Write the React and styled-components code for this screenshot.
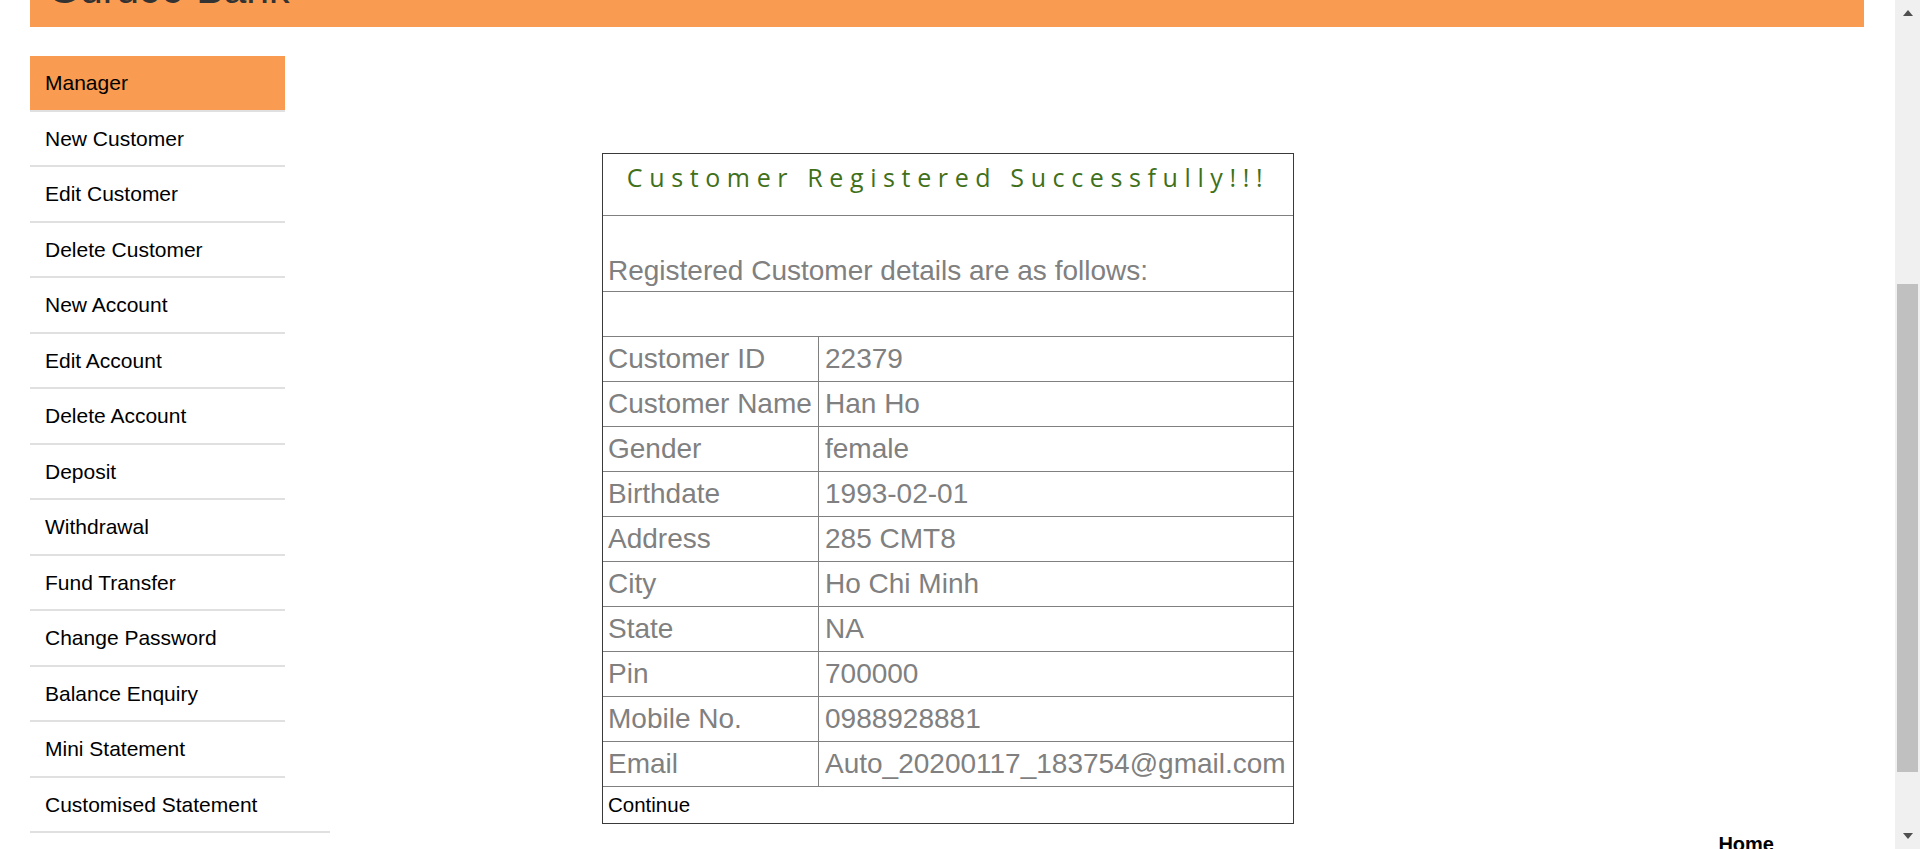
import React, { useLayoutEffect, useEffect } from 'react';
import styled, { createGlobalStyle } from 'styled-components';

const GlobalStyle = createGlobalStyle`
  html, body {
    margin: 0;
    padding: 0;
    background: #ffffff;
  }
  body {
    font-family: "Liberation Sans", Arial, sans-serif;
    color: #000;
  }
  *, *::before, *::after {
    box-sizing: border-box;
  }
`;

const ORANGE = '#f99b51';

const Page = styled.div`
  width: 100%;
  padding-bottom: 99px;
`;

const TopArea = styled.div`
  height: 420px;
`;

const Header = styled.header`
  margin-left: 30px;
  width: 1834px;
  height: 70px;
  background: ${ORANGE};
  padding: 9px 0 0 18px;
`;

const Brand = styled.h1`
  margin: 0;
  font-family: "Liberation Sans", Arial, sans-serif;
  font-weight: 400;
  font-size: 41px;
  line-height: 47px;
  color: #333333;
`;

const Main = styled.div`
  display: flex;
  align-items: flex-start;
  margin-top: 29px;
`;

const Sidebar = styled.ul`
  list-style: none;
  margin: 0 0 0 30px;
  padding: 0;
  width: 255px;
  flex: none;
`;

const NavItem = styled.li`
  width: ${(p) => (p.$wide ? '300px' : '255px')};
  height: 55.5px;
  display: flex;
  align-items: center;
  padding-left: 15px;
  padding-top: 1px;
  border-bottom: 2px solid #e0e0e0;
  background: ${(p) => (p.$active ? ORANGE : 'transparent')};
  font-size: 21px;
  color: #000;
  white-space: nowrap;
`;

const Content = styled.section`
  margin-left: 317px;
  margin-top: 97px;
`;

const Table = styled.table`
  width: 692px;
  table-layout: fixed;
  border: 1px solid #3a3a3a;
  border-spacing: 0;
  font-family: "Liberation Sans", Arial, sans-serif;
`;

const LabelCol = styled.col`
  width: 216px;
`;

const ValueCol = styled.col`
  width: 474px;
`;

const TitleCell = styled.td`
  height: 62px;
  padding: 6px 0 0 0;
  vertical-align: top;
  text-align: center;
  border-bottom: 1px solid #808080;
`;

const Title = styled.p`
  margin: 0;
  font-family: "Open Sans", "Noto Sans", sans-serif;
  font-size: 25px;
  line-height: 34px;
  letter-spacing: 6.62px;
  color: #40701a;
`;

const IntroCell = styled.td`
  height: 76px;
  padding: 0 0 4px 5px;
  vertical-align: bottom;
  font-size: 28px;
  line-height: 32px;
  color: #808080;
  border-bottom: 1px solid #808080;
`;

const EmptyCell = styled.td`
  height: 45px;
  padding: 0;
  border-bottom: 1px solid #808080;
`;

const DataCell = styled.td`
  height: 45px;
  padding: 0 0 0 ${(p) => (p.$value ? '6px' : '5px')};
  vertical-align: middle;
  font-size: 28px;
  line-height: 32px;
  color: #808080;
  white-space: nowrap;
  overflow: hidden;
  border-bottom: 1px solid #808080;
  border-right: ${(p) => (p.$value ? 'none' : '1px solid #808080')};
`;

const ContinueCell = styled.td`
  height: 36px;
  padding: 0 0 0 5px;
  vertical-align: middle;
  font-size: 20.5px;
  line-height: 24px;
  color: #000;
`;

const FooterNav = styled.nav`
  display: flex;
  justify-content: flex-end;
  padding-right: 146px;
`;

const HomeLink = styled.span`
  font-family: "Liberation Sans", Arial, sans-serif;
  font-weight: 700;
  font-size: 20px;
  line-height: 22px;
  color: #000;
`;

/* window scrollbar, drawn over the page's right edge */
const ScrollBar = styled.div`
  position: fixed;
  top: 0;
  right: 0;
  width: 25px;
  height: 100vh;
  background: #f0f0f0;
  display: flex;
  flex-direction: column;
  align-items: center;
  z-index: 10;
`;

const ArrowButton = styled.div`
  flex: none;
  width: 25px;
  height: 26px;
  display: flex;
  align-items: center;
  justify-content: center;
`;

const Triangle = styled.span`
  width: 0;
  height: 0;
  border-left: 5.5px solid transparent;
  border-right: 5.5px solid transparent;
  ${(p) =>
    p.$down
      ? 'border-top: 6px solid #505050;'
      : 'border-bottom: 6px solid #505050;'}
`;

const Track = styled.div`
  flex: 1;
  width: 25px;
  display: flex;
  flex-direction: column;
  align-items: center;
`;

const Thumb = styled.div`
  margin-top: 258px;
  width: 21px;
  height: 488px;
  background: #c0c0c0;
`;

const navItems = [
  'Manager',
  'New Customer',
  'Edit Customer',
  'Delete Customer',
  'New Account',
  'Edit Account',
  'Delete Account',
  'Deposit',
  'Withdrawal',
  'Fund Transfer',
  'Change Password',
  'Balance Enquiry',
  'Mini Statement',
  'Customised Statement',
];

const details = [
  ['Customer ID', '22379'],
  ['Customer Name', 'Han Ho'],
  ['Gender', 'female'],
  ['Birthdate', '1993-02-01'],
  ['Address', '285 CMT8'],
  ['City', 'Ho Chi Minh'],
  ['State', 'NA'],
  ['Pin', '700000'],
  ['Mobile No.', '0988928881'],
  ['Email', 'Auto_20200117_183754@gmail.com'],
];

export default function App() {
  useLayoutEffect(() => {
    if ('scrollRestoration' in window.history) window.history.scrollRestoration = 'manual';
    window.scrollTo(0, 463);
  }, []);
  useEffect(() => {
    const id = requestAnimationFrame(() => window.scrollTo(0, 463));
    return () => cancelAnimationFrame(id);
  }, []);

  return (
    <>
      <GlobalStyle />
      <Page>
        <TopArea />
        <Header>
          <Brand>Guru99 Bank</Brand>
        </Header>
        <Main>
          <Sidebar>
            {navItems.map((item, i) => (
              <NavItem key={item} $active={i === 0} $wide={i === navItems.length - 1}>
                {item}
              </NavItem>
            ))}
          </Sidebar>
          <Content>
            <Table>
              <colgroup>
                <LabelCol />
                <ValueCol />
              </colgroup>
              <tbody>
                <tr>
                  <TitleCell colSpan={2}>
                    <Title>Customer Registered Successfully!!!</Title>
                  </TitleCell>
                </tr>
                <tr>
                  <IntroCell colSpan={2}>Registered Customer details are as follows:</IntroCell>
                </tr>
                <tr>
                  <EmptyCell colSpan={2} />
                </tr>
                {details.map(([label, value]) => (
                  <tr key={label}>
                    <DataCell>{label}</DataCell>
                    <DataCell $value>{value}</DataCell>
                  </tr>
                ))}
                <tr>
                  <ContinueCell colSpan={2}>Continue</ContinueCell>
                </tr>
              </tbody>
            </Table>
          </Content>
        </Main>
        <FooterNav>
          <HomeLink>Home</HomeLink>
        </FooterNav>
      </Page>
      <ScrollBar aria-hidden="true">
        <ArrowButton>
          <Triangle />
        </ArrowButton>
        <Track>
          <Thumb />
        </Track>
        <ArrowButton>
          <Triangle $down />
        </ArrowButton>
      </ScrollBar>
    </>
  );
}
